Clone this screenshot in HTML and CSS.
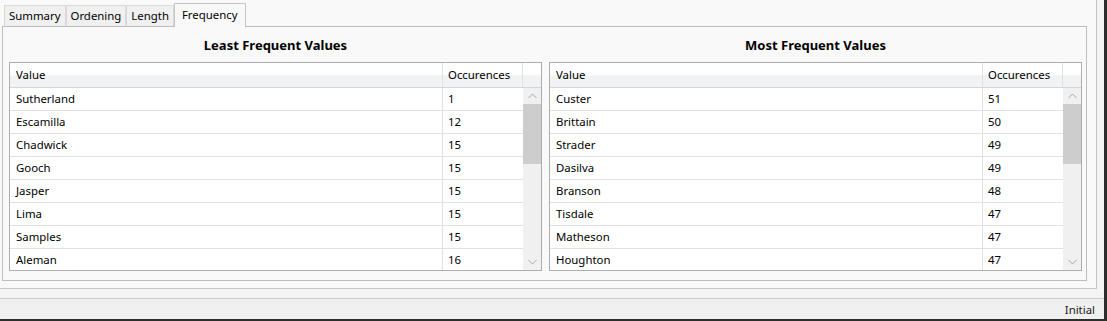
FILE: index.html
```html
<!DOCTYPE html>
<html>
<head>
<meta charset="utf-8">
<link rel="stylesheet" href="styles.css">
</head>
<body>
<div class="frame">
  <div class="top">
    <div class="group">
      <div class="tabs">
        <div class="tab">Summary</div>
        <div class="tab">Ordening</div>
        <div class="tab">Length</div>
        <div class="tab active">Frequency</div>
      </div>
      <div class="panel">
        <div class="col">
          <div class="title">Least Frequent Values</div>
          <div class="grid">
            <div class="hdr"><div class="c1">Value</div><div class="c2">Occurences</div><div class="c3"></div></div>
            <div class="body">
              <div class="rows">
                <div class="row"><div class="c1">Sutherland</div><div class="c2">1</div></div>
                <div class="row"><div class="c1">Escamilla</div><div class="c2">12</div></div>
                <div class="row"><div class="c1">Chadwick</div><div class="c2">15</div></div>
                <div class="row"><div class="c1">Gooch</div><div class="c2">15</div></div>
                <div class="row"><div class="c1">Jasper</div><div class="c2">15</div></div>
                <div class="row"><div class="c1">Lima</div><div class="c2">15</div></div>
                <div class="row"><div class="c1">Samples</div><div class="c2">15</div></div>
                <div class="row"><div class="c1">Aleman</div><div class="c2">16</div></div>
              </div>
              <div class="sb">
                <div class="arrow"><svg width="9" height="6" viewBox="0 0 9 6"><polyline points="0.5,5 4.5,1 8.5,5" fill="none" stroke="#a6a6a6" stroke-width="1"/></svg></div>
                <div class="thumb"></div>
                <div class="track"></div>
                <div class="arrow"><svg width="9" height="6" viewBox="0 0 9 6"><polyline points="0.5,1 4.5,5 8.5,1" fill="none" stroke="#a6a6a6" stroke-width="1"/></svg></div>
              </div>
            </div>
          </div>
        </div>
        <div class="col">
          <div class="title">Most Frequent Values</div>
          <div class="grid">
            <div class="hdr"><div class="c1">Value</div><div class="c2">Occurences</div><div class="c3"></div></div>
            <div class="body">
              <div class="rows">
                <div class="row"><div class="c1">Custer</div><div class="c2">51</div></div>
                <div class="row"><div class="c1">Brittain</div><div class="c2">50</div></div>
                <div class="row"><div class="c1">Strader</div><div class="c2">49</div></div>
                <div class="row"><div class="c1">Dasilva</div><div class="c2">49</div></div>
                <div class="row"><div class="c1">Branson</div><div class="c2">48</div></div>
                <div class="row"><div class="c1">Tisdale</div><div class="c2">47</div></div>
                <div class="row"><div class="c1">Matheson</div><div class="c2">47</div></div>
                <div class="row"><div class="c1">Houghton</div><div class="c2">47</div></div>
              </div>
              <div class="sb">
                <div class="arrow"><svg width="9" height="6" viewBox="0 0 9 6"><polyline points="0.5,5 4.5,1 8.5,5" fill="none" stroke="#a6a6a6" stroke-width="1"/></svg></div>
                <div class="thumb"></div>
                <div class="track"></div>
                <div class="arrow"><svg width="9" height="6" viewBox="0 0 9 6"><polyline points="0.5,1 4.5,5 8.5,1" fill="none" stroke="#a6a6a6" stroke-width="1"/></svg></div>
              </div>
            </div>
          </div>
        </div>
      </div>
    </div>
  </div>
  <div class="status">Initial</div>
</div>
</body>
</html>
```

FILE: styles.css
```css
* { box-sizing: border-box; }
html, body { margin: 0; padding: 0; }
body {
  width: 1107px;
  height: 321px;
  overflow: hidden;
  background: #2d2d2d;
  font-family: "Noto Sans", "Open Sans", sans-serif;
  font-size: 11.4px;
  color: #000;
}
.frame {
  width: 1104px;
  height: 319px;
  display: flex;
  flex-direction: column;
  background: #f0f0f0;
}
.top {
  height: 299px;
  border-bottom: 1px solid #cbcbcb;
  background: #f4f4f4;
  flex: none;
}
.group {
  width: 1097px;
  height: 289px;
  border-right: 1px solid #c3c3c3;
  border-bottom: 1px solid #c3c3c3;
  background: #f9f9f9;
}
.tabs {
  display: flex;
  align-items: flex-end;
  height: 26px;
  padding-left: 4px;
}
.tab {
  height: 21px;
  padding: 0 4px;
  border: 1px solid #d9d9d9;
  border-bottom: none;
  background: #f0f0f0;
  line-height: 20px;
  white-space: nowrap;
}
.tab.active {
  height: 24px;
  margin-bottom: -1px;
  padding: 0 7px;
  border-color: #c4c4c4;
  background: #f9f9f9;
  line-height: 22px;
  position: relative;
  z-index: 1;
}
.panel {
  margin-left: 2px;
  width: 1085px;
  height: 255px;
  border: 1px solid #bdbdbd;
  display: grid;
  grid-template-columns: 1fr 1fr;
  column-gap: 7px;
  padding: 0 4px 0 6px;
}
.col {
  display: flex;
  flex-direction: column;
  min-width: 0;
}
.title {
  height: 35px;
  padding-top: 9px;
  line-height: 18px;
  text-align: center;
  font-weight: bold;
  font-size: 13px;
}
.grid {
  height: 209px;
  border: 1px solid #adadad;
  background: #fff;
  overflow: hidden;
}
.hdr {
  display: flex;
  height: 25px;
  border-bottom: 1px solid #d5d5d5;
  background: linear-gradient(to bottom, #ffffff 0%, #ffffff 45%, #f1f2f3 55%, #f1f2f3 100%);
}
.hdr > div {
  line-height: 24px;
  white-space: nowrap;
}
.row > div {
  line-height: 22px;
  white-space: nowrap;
}
.c1 {
  width: 433px;
  padding-left: 6px;
  border-right: 1px solid #e1e1e1;
}
.c2 {
  width: 80px;
  padding-left: 5px;
  border-right: 1px solid #e1e1e1;
}
.c3 { flex: 1; }
.body {
  display: flex;
  height: 182px;
}
.rows { width: 513px; }
.row {
  display: flex;
  height: 23px;
  border-bottom: 1px solid #e0e0e0;
}
.row > .c2 { border-right: none; }
.sb {
  flex: 1;
  display: flex;
  flex-direction: column;
  background: #f0f0f0;
}
.arrow {
  height: 16px;
  display: flex;
  align-items: center;
  justify-content: center;
}
.thumb {
  height: 60px;
  background: #cdcdcd;
}
.track { flex: 1; }
.status {
  flex: 1;
  text-align: right;
  padding-right: 9px;
  line-height: 21px;
  color: #1a1a1a;
}
```
